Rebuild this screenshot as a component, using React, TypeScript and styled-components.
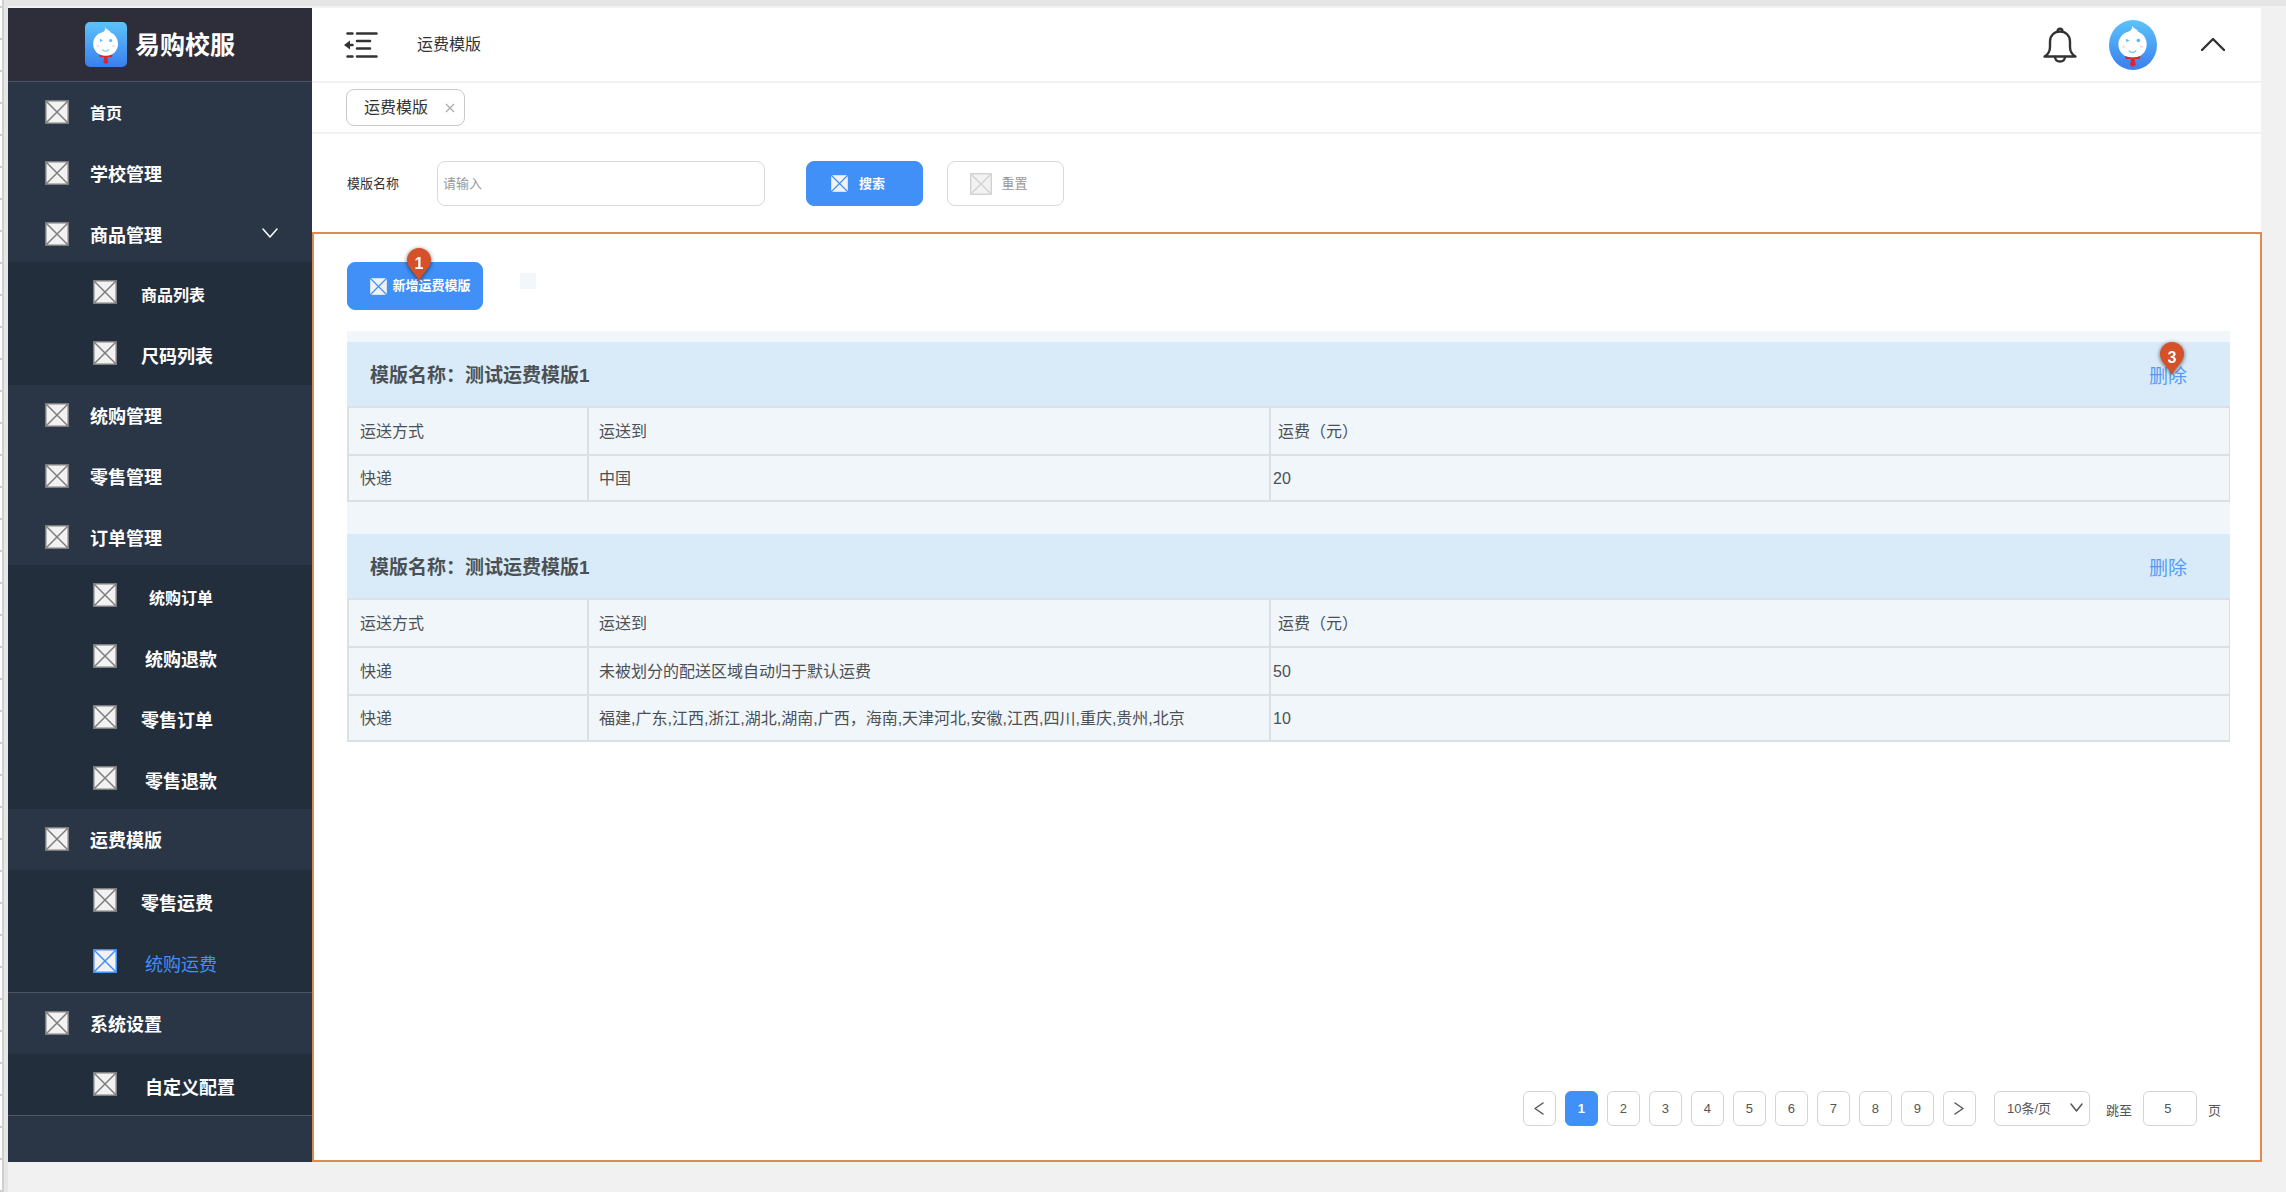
import React from "react";
import styled, { createGlobalStyle, css } from "styled-components";

const blue = "#4190f7";
const line = "#dbe0e3";

const GlobalStyle = createGlobalStyle`
  *, *::before, *::after { box-sizing: border-box; }
  body {
    margin: 0;
    background: #f1f1f1;
    color: #333;
    font-family: "Liberation Sans", "Noto Sans CJK SC", sans-serif;
    font-size: 16px;
    line-height: 24px;
  }
  button, input, select { font: inherit; color: inherit; margin: 0; }
  button { cursor: pointer; padding: 0; border: 0; background: none; }
  a { color: inherit; text-decoration: none; }
`;

const Page = styled.div`
  display: flex;
  min-height: 100vh;
`;

const Ruler = styled.div`
  width: 8px;
  flex: none;
  border-right: 4px solid #e6e6e6;
  background:
    linear-gradient(90deg, transparent 2px, #cfcfcf 2px),
    repeating-linear-gradient(180deg, #fff 0 6px, #cfcfcf 6px 8px, #fff 8px 32px);
`;

const Canvas = styled.div`
  display: flex;
  flex: 1;
  min-width: 0;
  padding: 2px 25px 30px 0;
  border-top: 6px solid #e5e5e5;
`;

const Sidebar = styled.aside`
  width: 304px;
  flex: none;
  background: #2a3545;
  color: #fff;
`;

const Brand = styled.div`
  display: flex;
  align-items: center;
  justify-content: center;
  gap: 8px;
  height: 74px;
  border-bottom: 1px solid #4a5366;
  background: #2e2e3a;
  font-size: 25px;
  font-weight: 700;
`;

const Menu = styled.ul<{ $nested?: boolean; $ruled?: boolean }>`
  margin: 0;
  padding: 0;
  list-style: none;
  ${(p) => p.$nested && css`background: #232e3c;`}
  ${(p) => p.$ruled && css`border-bottom: 1px solid #4d5662;`}
`;

const MenuText = styled.span<{ $gap: "top" | "near" | "far"; $small?: boolean }>`
  min-width: 72px;
  padding-top: ${(p) => (p.$gap === "top" ? 2 : 4)}px;
  margin-left: ${(p) => ({ top: 21, near: 24, far: 28 })[p.$gap]}px;
  font-size: ${(p) => (p.$small ? 16 : 18)}px;
  text-align: ${(p) => (p.$gap === "far" ? "center" : "left")};
`;

const MenuLink = styled.a<{ $nested?: boolean; $active?: boolean; $height: number }>`
  display: flex;
  align-items: flex-start;
  height: ${(p) => p.$height}px;
  padding: 18px 34px 0 ${(p) => (p.$nested ? 85 : 37)}px;
  color: ${(p) => (p.$active ? blue : "#fff")};
  font-weight: ${(p) => (p.$active ? 400 : 700)};

  > ${MenuText} + svg { margin: 6px 0 0 auto; }
`;

const Main = styled.main`
  display: flex;
  flex: 1;
  flex-direction: column;
  min-width: 0;
  background: #fff;
`;

const TopBar = styled.header`
  display: flex;
  align-items: center;
  height: 75px;
  padding: 0 36px 0 32px;
  border-bottom: 2px solid #f2f2f2;
`;

const IconButton = styled.button`
  display: flex;
`;

const Title = styled.h1`
  flex: 1;
  margin: 0 0 0 39px;
  font-size: 16px;
  font-weight: 400;
`;

const Account = styled.div`
  display: flex;
  align-items: center;
  gap: 32px;
`;

const Avatar = styled.span`
  display: flex;
  width: 48px;
  height: 50px;
  margin-right: 12px;
  border-radius: 50%;
  overflow: hidden;
`;

const Tabs = styled.nav`
  display: flex;
  align-items: center;
  height: 51px;
  padding: 0 34px;
  border-bottom: 2px solid #f2f2f2;
`;

const Tab = styled.div`
  display: flex;
  align-items: center;
  gap: 17px;
  height: 37px;
  padding: 0 9px 0 17px;
  border: 1px solid #c9c9c9;
  border-radius: 8px;
`;

const Search = styled.form`
  display: flex;
  align-items: center;
  height: 98px;
  padding: 1px 35px 0;
  font-size: 13px;
`;

const SearchInput = styled.input`
  width: 328px;
  height: 45px;
  margin: 0 41px 0 38px;
  padding: 0 5px;
  border: 1px solid #d9d9d9;
  border-radius: 8px;
  outline: none;
  &::placeholder { color: #999; opacity: 1; }
`;

const Action = styled.button<{ $primary?: boolean; $tall?: boolean }>`
  position: relative;
  display: flex;
  align-items: center;
  justify-content: center;
  gap: ${(p) => (p.$tall ? 4 : 10)}px;
  width: ${(p) => (p.$tall ? 136 : 117)}px;
  height: ${(p) => (p.$tall ? 48 : 45)}px;
  padding: ${(p) => (p.$tall ? "0 0 0 10px" : "0 14px 0 0")};
  border: 1px solid ${(p) => (p.$primary ? blue : "#d9d9d9")};
  border-radius: 8px;
  background: ${(p) => (p.$primary ? blue : "#fff")};
  color: ${(p) => (p.$primary ? "#fff" : "#999")};
  font-size: 13px;
  font-weight: ${(p) => (p.$primary ? 700 : 400)};
  & + & { margin-left: 24px; }
`;

const Panel = styled.section`
  display: flex;
  flex: 1;
  flex-direction: column;
  margin-right: -1px;
  padding: 28px 30px 34px 33px;
  border: 2px solid #dd8a57;
`;

const Toolbar = styled.div`
  display: flex;
  align-items: center;
  gap: 37px;
  margin-bottom: 21px;
`;

const Swatch = styled.span`
  width: 16px;
  height: 16px;
  margin-bottom: 10px;
  background: #f1f7fb;
`;

const TemplateList = styled.div`
  display: flex;
  flex-direction: column;
  gap: 32px;
  padding-top: 11px;
  background: #f1f6fa;
`;

const CardHead = styled.div`
  display: flex;
  align-items: center;
  justify-content: space-between;
  height: 64px;
  padding: 3px 43px 0 23px;
  background: #d9eaf8;
  font-size: 19px;
`;

const CardTitle = styled.h2`
  margin: 0;
  color: #4b5054;
  font-size: 19px;
  font-weight: 700;
`;

const Remove = styled.button`
  position: relative;
  padding-top: 3px;
  color: #559bf5;
`;

const Table = styled.table`
  width: 100%;
  table-layout: fixed;
  border-spacing: 0;
  color: #4b5054;
`;

const Col = styled.col<{ $width?: number }>`
  width: ${(p) => (p.$width ? `${p.$width}px` : "auto")};
`;

const cell = css`
  height: 48px;
  padding: 2px 10px 0;
  border-top: 2px solid ${line};
  border-left: 2px solid ${line};
  font-weight: 400;
  text-align: left;
  &:first-child { padding-left: 11px; }
  &:last-child { border-right: 1px solid ${line}; }
  tbody tr:last-child & { border-bottom: 2px solid ${line}; }
`;

const Th = styled.th`
  ${cell}
  &:last-child { padding-left: 7px; }
`;

const Td = styled.td`
  ${cell}
  &:last-child { padding-left: 2px; }
`;

const PinMark = styled.span<{ $top: number }>`
  position: absolute;
  top: ${(p) => p.$top}px;
  left: calc(50% - 13px);
  display: flex;
  filter: drop-shadow(0 1px 2px rgba(0, 0, 0, 0.6));
`;

const Pager = styled.nav`
  display: flex;
  align-items: center;
  justify-content: flex-end;
  margin-top: auto;
  padding-right: 9px;
  color: #555;
  font-size: 13px;
`;

const Pages = styled.div`
  display: flex;
  gap: 9px;
  margin-right: 18px;
`;

const box = css`
  height: 35px;
  border: 1px solid #d4d4d4;
  border-radius: 6px;
  background: #fff;
`;

const PageButton = styled.button<{ $current?: boolean }>`
  ${box}
  display: flex;
  align-items: center;
  justify-content: center;
  width: 33px;
  ${(p) => p.$current && css`
    border-color: ${blue};
    background: ${blue};
    color: #fff;
    font-weight: 700;
  `}
`;

const SizeBox = styled.div`
  position: relative;
  margin-right: 16px;
  > svg {
    position: absolute;
    top: 12px;
    right: 7px;
    pointer-events: none;
  }
`;

const SizeSelect = styled.select`
  ${box}
  width: 96px;
  padding: 0 24px 0 12px;
  appearance: none;
`;

const Jump = styled.label`
  display: flex;
  align-items: center;
  gap: 11px;
`;

const JumpText = styled.span`
  padding-top: 4px;
`;

const JumpInput = styled.input`
  ${box}
  width: 54px;
  padding: 0 12px 0 8px;
  text-align: center;
`;

function Placeholder({ size = 24, stroke = "#7d7d7d" }: { size?: number; stroke?: string }) {
  return (
    <svg width={size} height={size} viewBox="0 0 24 24" fill="none" aria-hidden="true">
      <rect x="0.75" y="0.75" width="22.5" height="22.5" fill="#f2f2f2" stroke={stroke} strokeWidth="1.5" />
      <path d="M1 1L23 23M23 1L1 23" stroke={stroke} strokeWidth="1.5" />
    </svg>
  );
}

function Chevron({ direction, width, height, weight = 1.5 }: {
  direction: "up" | "down" | "left" | "right";
  width: number;
  height: number;
  weight?: number;
}) {
  const w = width - 1;
  const h = height - 1;
  const d = {
    up: `M1 ${h}L${width / 2} 1L${w} ${h}`,
    down: `M1 1L${width / 2} ${h}L${w} 1`,
    left: `M${w} 1L1 ${height / 2}L${w} ${h}`,
    right: `M1 1L${w} ${height / 2}L1 ${h}`,
  }[direction];
  return (
    <svg width={width} height={height} fill="none" stroke="currentColor" strokeWidth={weight} strokeLinecap="round" strokeLinejoin="round" aria-hidden="true">
      <path d={d} />
    </svg>
  );
}

function Mascot({ id, width, height, radius }: { id: string; width: number; height: number; radius: number }) {
  return (
    <svg width={width} height={height} viewBox="0 0 42 45" preserveAspectRatio="none" aria-hidden="true">
      <defs>
        <linearGradient id={id} x1="0" y1="0" x2="0" y2="1">
          <stop offset="0" stopColor="#5cc3fa" />
          <stop offset="1" stopColor="#3a7ff0" />
        </linearGradient>
      </defs>
      <rect width="42" height="45" rx={radius} fill={`url(#${id})`} />
      <path d="M20.3 5C21 7.800 25 8.200 25.600 10.600C30 12.600 33 16.500 33 22C33 29 27.500 34 20.700 34C13.700 34 8.200 29 8.200 22C8.200 16 12 11.800 17.300 10.300C19.600 9.300 20.600 7.500 20.300 5Z" fill="#fff" />
      <path d="M15 16.800L18 18.500L15 20Z" fill="#5cc3fa" />
      <circle cx="25.700" cy="18.500" r="1.600" fill="#5cb8fa" />
      <path d="M17.500 27.500C18.600 29.800 22.600 29.800 23.700 27.500" fill="none" stroke="#70c4f8" strokeWidth="1.200" />
      <circle cx="12.800" cy="24" r="1.200" fill="#fdd9dc" />
      <circle cx="28.300" cy="24" r="1.200" fill="#fdd9dc" />
      <path d="M14 32.500C17 34.200 24.500 34.200 27.500 32.500L26.800 35L22.300 35.200L23.400 40.500L20.800 42L18.300 40.500L19.300 35.200L14.800 35Z" fill="#d8272e" />
    </svg>
  );
}

function Pin({ label, top }: { label: string; top: number }) {
  return (
    <PinMark $top={top}>
      <svg width="34" height="34" viewBox="-4 0 34 34">
        <path d="M13 33C10.500 26 1 20.500 1 12A12 12 0 0 1 25 12C25 20.500 15.500 26 13 33Z" fill="#d5512a" />
        <text x="13" y="20.500" textAnchor="middle" fontSize="16" fontWeight="700" fill="#fff">{label}</text>
      </svg>
    </PinMark>
  );
}

function FoldIcon() {
  return (
    <svg width="34" height="26" viewBox="0 0 34 26" fill="none" stroke="#333" strokeWidth="2.500" strokeLinecap="round" aria-hidden="true">
      <path d="M3.500 1.500H8.500M13 1.500H32.500M13 9H26M13 16.500H26M3.500 24.500H8.500M13 24.500H32.500M4 13H8.500" />
      <path d="M0 13L6 8.500V17.500Z" fill="#333" stroke="none" />
    </svg>
  );
}

function BellIcon() {
  return (
    <svg width="34" height="36" viewBox="0 0 34 36" fill="none" stroke="#333" strokeWidth="2.400" strokeLinecap="round" strokeLinejoin="round" aria-hidden="true">
      <path d="M1.500 29.500C5 27.500 7 24.500 7 20V14.500C7 8.500 11.500 4.500 17 4.500C22.500 4.500 27 8.500 27 14.500V20C27 24.500 29 27.500 32.500 29.500Z" />
      <path d="M14.500 4.500C14.500 0.700 19.500 0.700 19.500 4.500M12 30C12.500 36 21.500 36 22 30" />
    </svg>
  );
}

type Item = { text: string; gap?: "near" | "far"; small?: boolean; active?: boolean; open?: boolean; height?: number };
type Group = { nested?: boolean; ruled?: boolean; items: Item[] };

const groups: Group[] = [
  { items: [{ text: "首页", small: true }, { text: "学校管理" }, { text: "商品管理", open: true, height: 58 }] },
  { nested: true, items: [{ text: "商品列表", gap: "near", small: true }, { text: "尺码列表", gap: "near", height: 62 }] },
  { items: [{ text: "统购管理" }, { text: "零售管理" }, { text: "订单管理", height: 58 }] },
  {
    nested: true,
    items: [
      { text: "统购订单", gap: "far", small: true },
      { text: "统购退款", gap: "far" },
      { text: "零售订单", gap: "near" },
      { text: "零售退款", gap: "far" },
    ],
  },
  { items: [{ text: "运费模版" }] },
  { nested: true, ruled: true, items: [{ text: "零售运费", gap: "near" }, { text: "统购运费", gap: "far", active: true }] },
  { items: [{ text: "系统设置" }] },
  { nested: true, ruled: true, items: [{ text: "自定义配置", gap: "far" }] },
];

const templates = [
  { name: "测试运费模版1", pin: "3", rows: [["快递", "中国", "20"]] },
  {
    name: "测试运费模版1",
    rows: [
      ["快递", "未被划分的配送区域自动归于默认运费", "50"],
      ["快递", "福建,广东,江西,浙江,湖北,湖南,广西，海南,天津河北,安徽,江西,四川,重庆,贵州,北京", "10"],
    ],
  },
];

export default function App() {
  return (
    <>
      <GlobalStyle />
      <Page>
        <Ruler />
        <Canvas>
          <Sidebar>
            <Brand>
              <Mascot id="brand" width={42} height={45} radius={5} />
              <span>易购校服</span>
            </Brand>
            <nav>
              {groups.map((group, g) => (
                <Menu key={g} $nested={group.nested} $ruled={group.ruled}>
                  {group.items.map((item) => (
                    <li key={item.text}>
                      <MenuLink href="#" $nested={group.nested} $active={item.active} $height={item.height ?? 61}>
                        <Placeholder stroke={item.active ? blue : undefined} />
                        <MenuText $gap={item.gap ?? "top"} $small={item.small}>{item.text}</MenuText>
                        {item.open && <Chevron direction="down" width={16} height={10} />}
                      </MenuLink>
                    </li>
                  ))}
                </Menu>
              ))}
            </nav>
          </Sidebar>
          <Main>
            <TopBar>
              <IconButton aria-label="收起菜单"><FoldIcon /></IconButton>
              <Title>运费模版</Title>
              <Account>
                <IconButton aria-label="通知"><BellIcon /></IconButton>
                <Avatar><Mascot id="avatar" width={48} height={50} radius={0} /></Avatar>
                <IconButton aria-label="收起"><Chevron direction="up" width={24} height={13} weight={2.4} /></IconButton>
              </Account>
            </TopBar>
            <Tabs>
              <Tab>
                <a href="#">运费模版</a>
                <IconButton aria-label="关闭">
                  <svg width="10" height="10" stroke="#aaa" strokeWidth="1.200" aria-hidden="true">
                    <path d="M1 1L9 9M9 1L1 9" />
                  </svg>
                </IconButton>
              </Tab>
            </Tabs>
            <Search onSubmit={(e) => e.preventDefault()}>
              <label htmlFor="template-name">模版名称</label>
              <SearchInput id="template-name" placeholder="请输入" />
              <Action type="submit" $primary>
                <Placeholder size={19} stroke={blue} />
                搜索
              </Action>
              <Action type="reset">
                <Placeholder size={22} stroke="#d2d2d2" />
                重置
              </Action>
            </Search>
            <Panel>
              <Toolbar>
                <Action type="button" $primary $tall>
                  <Placeholder size={19} stroke={blue} />
                  新增运费模版
                  <Pin label="1" top={-15} />
                </Action>
                <Swatch />
              </Toolbar>
              <TemplateList>
                {templates.map((t, i) => (
                  <article key={i}>
                    <CardHead>
                      <CardTitle>模版名称：{t.name}</CardTitle>
                      <Remove type="button">
                        删除
                        {t.pin && <Pin label={t.pin} top={-20} />}
                      </Remove>
                    </CardHead>
                    <Table>
                      <colgroup>
                        <Col $width={240} />
                        <Col $width={682} />
                        <Col />
                      </colgroup>
                      <thead>
                        <tr>
                          <Th scope="col">运送方式</Th>
                          <Th scope="col">运送到</Th>
                          <Th scope="col">运费（元）</Th>
                        </tr>
                      </thead>
                      <tbody>
                        {t.rows.map((row, r) => (
                          <tr key={r}>
                            {row.map((value, c) => <Td key={c}>{value}</Td>)}
                          </tr>
                        ))}
                      </tbody>
                    </Table>
                  </article>
                ))}
              </TemplateList>
              <Pager aria-label="分页">
                <Pages>
                  <PageButton aria-label="上一页"><Chevron direction="left" width={10} height={13} /></PageButton>
                  {[1, 2, 3, 4, 5, 6, 7, 8, 9].map((n) => (
                    <PageButton key={n} $current={n === 1} aria-current={n === 1 ? "page" : undefined}>{n}</PageButton>
                  ))}
                  <PageButton aria-label="下一页"><Chevron direction="right" width={10} height={13} /></PageButton>
                </Pages>
                <SizeBox>
                  <SizeSelect aria-label="每页条数" defaultValue="10">
                    <option value="10">10条/页</option>
                  </SizeSelect>
                  <Chevron direction="down" width={13} height={9} />
                </SizeBox>
                <Jump>
                  <JumpText>跳至</JumpText>
                  <JumpInput defaultValue="5" />
                  <JumpText>页</JumpText>
                </Jump>
              </Pager>
            </Panel>
          </Main>
        </Canvas>
      </Page>
    </>
  );
}
